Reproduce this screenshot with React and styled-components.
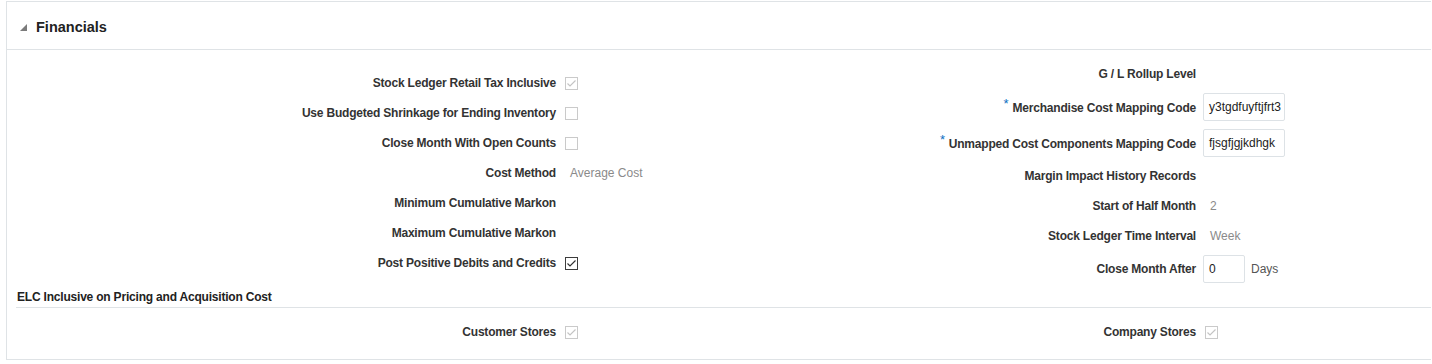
import React from "react";
import styled, { createGlobalStyle } from "styled-components";

const Global = createGlobalStyle`
  html, body { margin: 0; padding: 0; background: #fff; }
  body { font-family: "Liberation Sans", Arial, sans-serif; color: #333; }
`;

const Panel = styled.section`
  margin: 1px 1px 0 6px;
  border: 1px solid #dfe3e6;
  border-right: none;
  height: 359px;
  box-sizing: border-box;
`;

const Header = styled.div`
  display: flex;
  align-items: center;
  height: 48px;
  padding: 3px 0 0 13px;
  box-sizing: border-box;
  border-bottom: 1px solid #dfe3e6;
`;

const Title = styled.h2`
  margin: 0 0 0 9px;
  font-size: 14.5px;
  font-weight: bold;
  color: #222;
`;

const Body = styled.div`
  display: flex;
  flex-direction: column;
`;

const Columns = styled.div`
  display: flex;
`;

const Column = styled.div`
  width: ${(p) => p.$width}px;
  padding-top: ${(p) => p.$top || 0}px;
  display: flex;
  flex-direction: column;
`;

const Row = styled.div`
  display: grid;
  grid-template-columns: ${(p) => p.$labelWidth}px auto;
  column-gap: ${(p) => p.$gap}px;
  align-items: center;
  height: ${(p) => p.$height || 30}px;
`;

const Label = styled.label`
  text-align: right;
  font-size: 12px;
  font-weight: bold;
  letter-spacing: -0.2px;
  color: #333;
  white-space: nowrap;
`;

const Req = styled.span`
  color: #0a6fc2;
  font-weight: normal;
  font-size: 13px;
  position: relative;
  top: -4px;
  margin-right: 4px;
`;

const Field = styled.div`
  display: flex;
  align-items: center;
  gap: 6px;
`;

const Value = styled.span`
  font-size: 12px;
  color: #8a8a8a;
  padding-left: ${(p) => p.$pad}px;
`;

const Unit = styled.span`
  font-size: 12px;
  color: #555;
`;

const Input = styled.div`
  box-sizing: border-box;
  width: ${(p) => p.$width}px;
  height: 28px;
  border: 1px solid #dde2e6;
  border-radius: 2px;
  padding: 0 5px;
  display: flex;
  align-items: center;
  font-size: 12px;
  color: #222;
  overflow: hidden;
  white-space: nowrap;
  background: #fff;
`;

const Box = styled.span`
  display: inline-flex;
  align-items: center;
  justify-content: center;
  box-sizing: border-box;
  width: 13px;
  height: 13px;
  margin-left: ${(p) => p.$offset || 0}px;
  border: 1px solid ${(p) => (p.$enabled && p.$checked ? "#3d3d3d" : "#cacaca")};
  background: #fff;
`;

const SubHeader = styled.div`
  margin-left: 9px;
  height: 21px;
  padding: 2px 0 0 1px;
  box-sizing: border-box;
  border-bottom: 1px solid #dfe3e6;
  font-size: 12px;
  font-weight: bold;
  letter-spacing: -0.2px;
  color: #222;
  line-height: 16px;
`;

const Stores = styled.div`
  display: flex;
  padding-top: 9px;
`;

function Triangle() {
  return (
    <svg width="7" height="7" viewBox="0 0 7 7">
      <polygon points="7,0 7,7 0,7" fill="#7b7b7b" />
    </svg>
  );
}

function Checkbox({ checked, enabled, offset }) {
  return (
    <Box $checked={checked} $enabled={enabled} $offset={offset}>
      {checked && (
        <svg width="11" height="11" viewBox="0 0 11 11">
          <polyline
            points="1.5,5.5 4,8 9.5,2.5"
            fill="none"
            stroke={enabled ? "#333" : "#c4c4c4"}
            strokeWidth="1.2"
          />
        </svg>
      )}
    </Box>
  );
}

const L = { labelWidth: 549, gap: 9 };
const R = { labelWidth: 549, gap: 7 };

function LRow({ label, children, height }) {
  return (
    <Row $labelWidth={L.labelWidth} $gap={L.gap} $height={height}>
      <Label>{label}</Label>
      <Field>{children}</Field>
    </Row>
  );
}

function RRow({ label, required, children, height }) {
  return (
    <Row $labelWidth={R.labelWidth} $gap={R.gap} $height={height}>
      <Label>
        {required && <Req>*</Req>}
        {label}
      </Label>
      <Field>{children}</Field>
    </Row>
  );
}

export default function App() {
  return (
    <>
      <Global />
      <Panel>
        <Header>
          <Triangle />
          <Title>Financials</Title>
        </Header>
        <Body>
          <Columns>
            <Column $width={640} $top={18}>
              <LRow label="Stock Ledger Retail Tax Inclusive">
                <Checkbox checked />
              </LRow>
              <LRow label="Use Budgeted Shrinkage for Ending Inventory">
                <Checkbox />
              </LRow>
              <LRow label="Close Month With Open Counts">
                <Checkbox />
              </LRow>
              <LRow label="Cost Method">
                <Value $pad={5}>Average Cost</Value>
              </LRow>
              <LRow label="Minimum Cumulative Markon" />
              <LRow label="Maximum Cumulative Markon" />
              <LRow label="Post Positive Debits and Credits">
                <Checkbox checked enabled />
              </LRow>
            </Column>
            <Column $width={760} $top={9}>
              <RRow label="G / L Rollup Level" />
              <RRow label="Merchandise Cost Mapping Code" required height={36}>
                <Input $width={82}>y3tgdfuyftjfrt3</Input>
              </RRow>
              <RRow label="Unmapped Cost Components Mapping Code" required height={36}>
                <Input $width={82}>fjsgfjgjkdhgk</Input>
              </RRow>
              <RRow label="Margin Impact History Records" />
              <RRow label="Start of Half Month">
                <Value $pad={7}>2</Value>
              </RRow>
              <RRow label="Stock Ledger Time Interval">
                <Value $pad={7}>Week</Value>
              </RRow>
              <RRow label="Close Month After" height={36}>
                <Input $width={42}>0</Input>
                <Unit>Days</Unit>
              </RRow>
            </Column>
          </Columns>
          <SubHeader>ELC Inclusive on Pricing and Acquisition Cost</SubHeader>
          <Stores>
            <Column $width={640}>
              <LRow label="Customer Stores">
                <Checkbox checked />
              </LRow>
            </Column>
            <Column $width={760}>
              <RRow label="Company Stores">
                <Checkbox checked offset={2} />
              </RRow>
            </Column>
          </Stores>
        </Body>
      </Panel>
    </>
  );
}
